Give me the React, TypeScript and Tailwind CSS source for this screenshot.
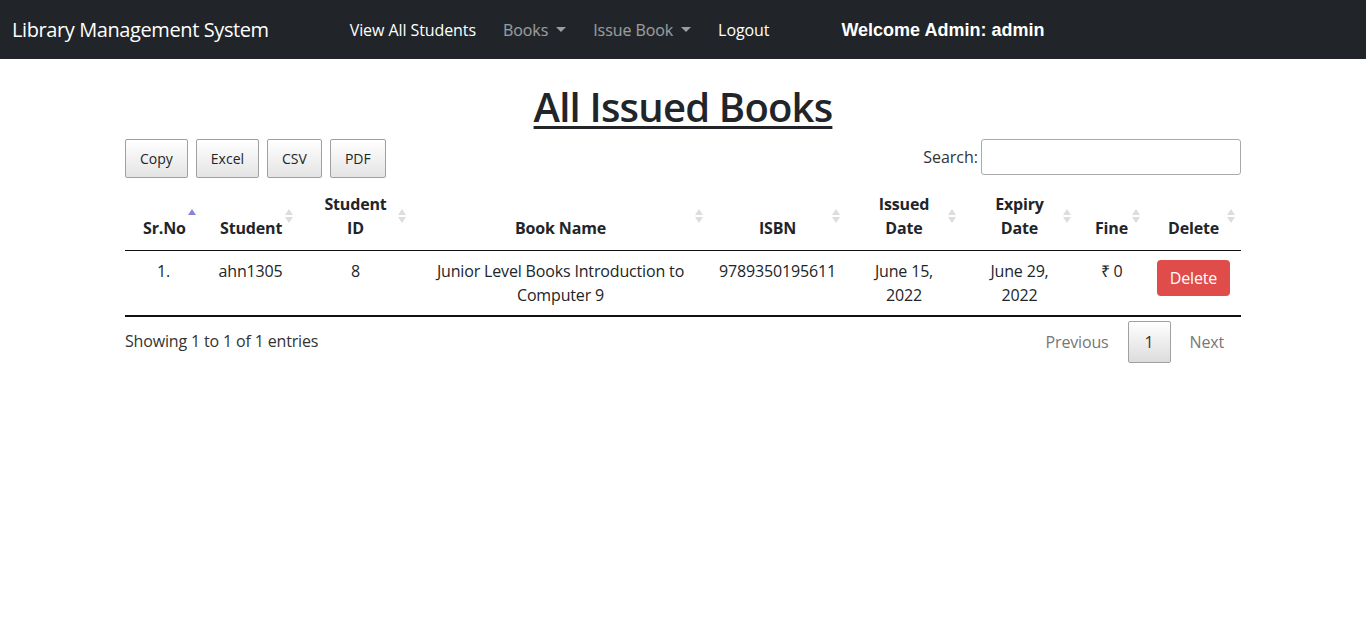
import React from "react";

const columns = [
  { label: ["Sr.No"], width: 77, active: true },
  { label: ["Student"], width: 97 },
  { label: ["Student", "ID"], width: 113 },
  { label: ["Book Name"], width: 297 },
  { label: ["ISBN"], width: 137 },
  { label: ["Issued", "Date"], width: 116 },
  { label: ["Expiry", "Date"], width: 115 },
  { label: ["Fine"], width: 69 },
  { label: ["Delete"], width: 95 },
];

const SortIcon = ({ active }: { active?: boolean }) => (
  <span className="absolute right-[6px] top-1/2 flex -translate-y-1/2 flex-col items-center gap-[2px]">
    <span
      className={`h-0 w-0 border-x-[4px] border-b-[6px] border-x-transparent ${
        active ? "border-b-[#8585da]" : "border-b-[#dddddd]"
      }`}
    />
    <span
      className={`h-0 w-0 border-x-[4px] border-t-[6px] border-x-transparent border-t-[#dddddd] ${
        active ? "invisible" : ""
      }`}
    />
  </span>
);

const Caret = () => (
  <span className="ml-[8px] inline-block h-0 w-0 translate-y-[-2px] border-x-[5px] border-t-[5px] border-x-transparent border-t-current align-middle" />
);

const btn =
  "rounded-[2px] border border-[#a0a0a0] bg-gradient-to-b from-white to-[#e4e4e4] px-[14px] py-[7px] text-[14px] leading-[23px] text-[#212529]";

const App = () => {
  return (
    <div className="min-h-screen bg-white font-['Open_Sans',sans-serif] text-[16px] leading-6 text-[#212529]">
      <nav className="flex h-[59px] items-center bg-[#212529] px-3">
        <a className="text-[20px] tracking-[-0.02em] text-white" href="#">
          Library Management System
        </a>
        <ul className="ml-[81px] flex items-center gap-[27px] text-[16px] tracking-[-0.005em]">
          <li className="text-white">View All Students</li>
          <li className="text-white/55">
            Books
            <Caret />
          </li>
          <li className="text-white/55">
            Issue Book
            <Caret />
          </li>
          <li className="text-white">Logout</li>
        </ul>
        <span className="ml-[72px] font-['Liberation_Sans',Arial,sans-serif] text-[18px] font-bold text-white">
          Welcome Admin: admin
        </span>
      </nav>

      <div className="mx-auto w-[1140px] px-3">
        <h1 className="mb-2 mt-6 text-center text-[40px] font-semibold leading-[48px] tracking-[-0.02em] underline decoration-[3px] underline-offset-[4px]">
          All Issued Books
        </h1>

        <div className="flex items-start justify-between">
          <div className="flex gap-[8px]">
            <button className={btn}>Copy</button>
            <button className={btn}>Excel</button>
            <button className={btn}>CSV</button>
            <button className={btn}>PDF</button>
          </div>
          <label className="flex items-center text-[#333]">
            Search:
            <input className="ml-[3px] h-[36px] w-[260px] rounded-[3px] border border-[#aaa] px-[5px]" />
          </label>
        </div>

        <table className="mt-[4px] w-full table-fixed border-collapse">
          <colgroup>
            {columns.map((c, i) => (
              <col key={i} style={{ width: c.width }} />
            ))}
          </colgroup>
          <thead>
            <tr className="border-b border-[#111]">
              {columns.map((c, i) => (
                <th
                  key={i}
                  className="relative px-[18px] py-[10px] text-center align-bottom font-bold tracking-[-0.01em]"
                >
                  {c.label.map((l, j) => (
                    <div key={j}>{l}</div>
                  ))}
                  <SortIcon active={c.active} />
                </th>
              ))}
            </tr>
          </thead>
          <tbody>
            <tr className="border-b-2 border-[#111] text-center align-top tracking-[-0.01em]">
              <td className="px-[10px] py-[8px]">1.</td>
              <td className="px-[10px] py-[8px]">ahn1305</td>
              <td className="px-[10px] py-[8px]">8</td>
              <td className="px-[10px] py-[8px]">
                Junior Level Books Introduction to Computer 9
              </td>
              <td className="px-[10px] py-[8px]">9789350195611</td>
              <td className="px-[10px] py-[8px]">June 15, 2022</td>
              <td className="px-[10px] py-[8px]">June 29, 2022</td>
              <td className="px-[10px] py-[8px]">₹ 0</td>
              <td className="px-[10px] pb-[8px] pt-[9px]">
                <button className="rounded-[4px] bg-[#df4c4a] px-[13px] py-[6px] leading-6 text-white">
                  Delete
                </button>
              </td>
            </tr>
          </tbody>
        </table>

        <div className="flex items-start justify-between tracking-[-0.01em]">
          <div className="pt-[12px] text-[#333]">Showing 1 to 1 of 1 entries</div>
          <div className="mr-[1px] flex items-center gap-[3px] pt-[4px]">
            <span className="px-[16px] py-[8px] text-[#777]">Previous</span>
            <span className="rounded-[2px] border border-[#a0a0a0] bg-gradient-to-b from-white to-[#dcdcdc] px-[16px] py-[8px] text-[#333]">
              1
            </span>
            <span className="px-[16px] py-[8px] text-[#777]">Next</span>
          </div>
        </div>
      </div>
    </div>
  );
};

export default App;
